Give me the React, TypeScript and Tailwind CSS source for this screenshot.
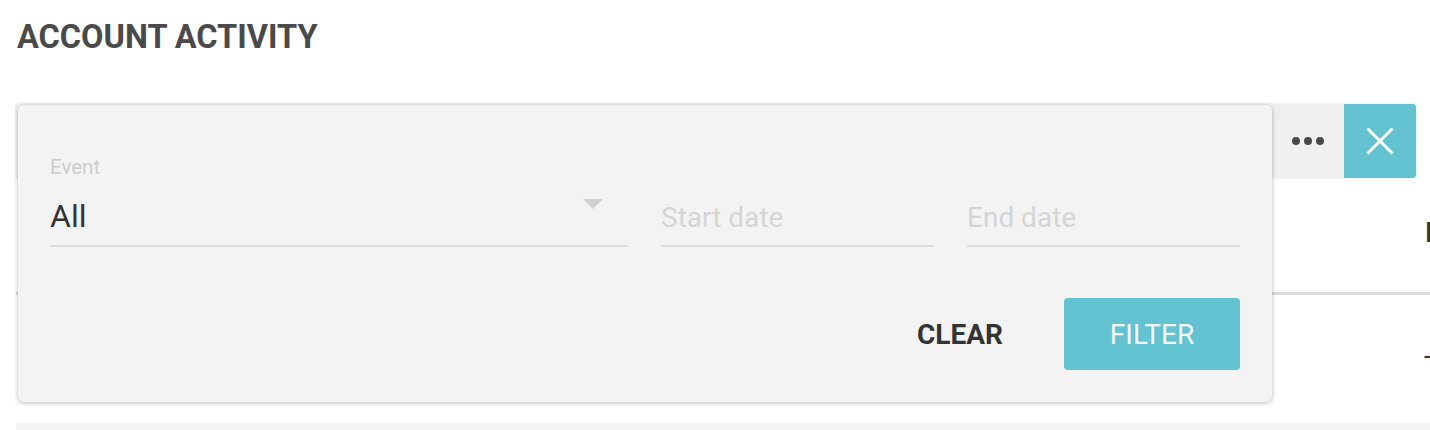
import React from "react";

export default function App() {
  return (
    <div className="relative w-[1430px] h-[430px] overflow-hidden bg-white font-['Roboto',_'Liberation_Sans',_sans-serif]">
      <div className="pt-[21px]">
        <h1 className="pl-[17px] text-[32.5px] font-bold leading-none text-[#4a4a4a]">ACCOUNT ACTIVITY</h1>

        {/* toolbar */}
        <div className="mt-[50.5px] ml-4 w-[1400px] h-[74px] flex bg-[#efefef] rounded-r-[4px] shadow-[0_0_2px_rgba(0,0,0,0.2)]">
          <div className="flex-1" />
          <div className="w-[72px] flex items-center justify-center gap-[4px]">
            <span className="w-[8px] h-[8px] rounded-full bg-[#4a4a4a]" />
            <span className="w-[8px] h-[8px] rounded-full bg-[#4a4a4a]" />
            <span className="w-[8px] h-[8px] rounded-full bg-[#4a4a4a]" />
          </div>
          <div className="w-[72px] flex items-center justify-center bg-[#63c3d1] rounded-r-[4px]">
            <svg width="28" height="28" viewBox="0 0 28 28" fill="none">
              <path d="M1.5 1.5 L26.5 26.5 M26.5 1.5 L1.5 26.5" stroke="#ffffff" strokeWidth="3" />
            </svg>
          </div>
        </div>

        {/* table */}
        <div className="ml-4 w-[1600px]">
          <div className="h-[114px] flex pt-[41px]">
            <div className="w-[1409px] shrink-0" />
            <div className="text-[28px] font-bold leading-none text-[#333333] whitespace-nowrap">IP Address</div>
          </div>
          <div className="h-[3px] bg-[#dcdcdc]" />
          <div className="h-[128px] flex pt-[47px]">
            <div className="w-[1408px] shrink-0" />
            <div className="text-[28px] leading-none text-[#333333]">-</div>
          </div>
          <div className="h-[20px] bg-[#f5f5f5]" />
        </div>
      </div>

      {/* filter popover */}
      <div className="absolute left-[18px] top-[105px] w-[1254px] h-[297px] bg-[#f3f3f3] rounded-[6px] shadow-[0_1px_5px_rgba(0,0,0,0.28)] px-8 pt-[52px]">
        <div className="flex items-end gap-[33px]">
          <div className="w-[578px]">
            <div className="text-[20.5px] leading-none text-[#cccccc]">Event</div>
            <div className="relative mt-[22px] h-[47px] border-b-2 border-[#dddddd]">
              <span className="text-[32px] leading-none text-[#333333]">All</span>
              <svg className="absolute right-[25px] top-[-1px]" width="20" height="10" viewBox="0 0 20 10">
                <path d="M0 0 L20 0 L10 10 Z" fill="#d0d0d0" />
              </svg>
            </div>
          </div>
          <div className="w-[273px] h-[47px] border-b-2 border-[#dddddd] pt-[4px]">
            <span className="text-[28px] leading-none text-[#d5d5d5]">Start date</span>
          </div>
          <div className="w-[273px] h-[47px] border-b-2 border-[#dddddd] pt-[4px]">
            <span className="text-[28px] leading-none text-[#d5d5d5]">End date</span>
          </div>
        </div>
        <div className="mt-[51px] flex justify-end gap-4">
          <button className="w-[176px] h-[72px] flex items-center justify-center pt-[2px] text-[28px] font-bold text-[#333333]">CLEAR</button>
          <button className="w-[176px] h-[72px] flex items-center justify-center pt-[2px] rounded-[4px] bg-[#63c3d1] text-[28px] text-[#f2f9fa]">FILTER</button>
        </div>
      </div>
    </div>
  );
}
